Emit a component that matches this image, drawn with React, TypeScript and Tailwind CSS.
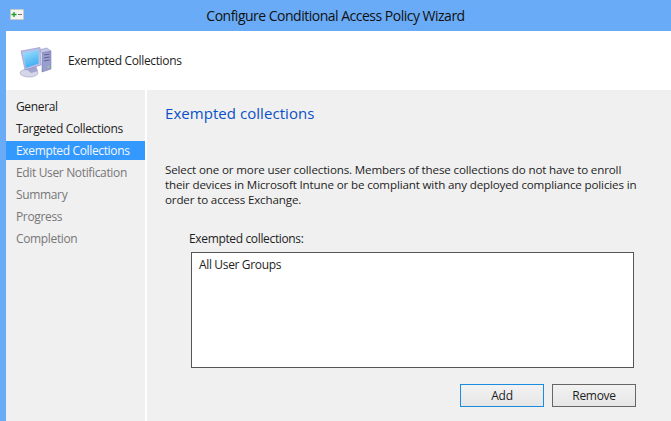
import React from 'react';

const steps = [
  { label: 'General', state: 'done' },
  { label: 'Targeted Collections', state: 'done' },
  { label: 'Exempted Collections', state: 'active' },
  { label: 'Edit User Notification', state: 'todo' },
  { label: 'Summary', state: 'todo' },
  { label: 'Progress', state: 'todo' },
  { label: 'Completion', state: 'todo' },
];

const WizardIcon = () => (
  <svg width="42" height="40" viewBox="0 0 42 40" className="mt-[3px] shrink-0">
    <defs>
      <linearGradient id="screen" x1="0" y1="0" x2="0.4" y2="1">
        <stop offset="0" stopColor="#a8e2fd" />
        <stop offset="1" stopColor="#3fb0f2" />
      </linearGradient>
    </defs>
    {/* tower */}
    <path d="M24 8 L33 6 L37 9 L28 11 Z" fill="#c3c6e6" stroke="#8a8dbd" strokeWidth="0.5" />
    <path d="M28 11 L37 9 L37 27 L28 30 Z" fill="#9a9dd0" stroke="#6d70a3" strokeWidth="0.5" />
    <path d="M30 13 L35.5 12 M30 16 L35.5 15 M30 19 L35.5 18" stroke="#5f628f" strokeWidth="1" />
    <rect x="33.5" y="24" width="1.6" height="1.4" fill="#8fe36f" />
    {/* stand and base */}
    <ellipse cx="15" cy="31" rx="9" ry="4" fill="#d5d6e8" stroke="#8d8fb2" strokeWidth="0.5" />
    <path d="M12 27 L22 24 L24 29 L17 31 Z" fill="#a3a5cf" />
    {/* monitor */}
    <path d="M7 9 L26 5.5 L27 23 L11 28 Z" fill="#b9bee8" stroke="#8b90c4" strokeWidth="0.6" />
    <path d="M9 11 L24.5 8 L24.5 21.5 L12 26 Z" fill="url(#screen)" />
  </svg>
);

export default function App() {
  return (
    <div className="flex h-[421px] w-[671px] flex-col overflow-hidden bg-[#69abf6] font-['Open_Sans','Noto_Sans',sans-serif] text-[12px] text-[#1e1e1e]">
      <div className="relative flex h-[31px] shrink-0 items-center justify-center text-[14px] tracking-[-0.5px] text-[#111]">
        <div className="absolute left-[10px] top-[9px] flex h-[11px] w-[14px] items-center justify-center rounded-[1px] border border-[#c9c9c9] bg-[#f4f4f0]">
          <svg width="12" height="7" viewBox="0 0 12 7">
            <path d="M0.5 3.5 H5.5 M3 1 V6" stroke="#1c9c2c" strokeWidth="1.3" />
            <path d="M7 3.5 H11" stroke="#777" strokeWidth="1" />
          </svg>
        </div>
        <span className="pb-px">Configure Conditional Access Policy Wizard</span>
      </div>
      <div className="ml-[6px] flex flex-1 flex-col bg-white">
        <div className="flex h-[59px] shrink-0 items-center pl-[8px]">
          <WizardIcon />
          <span className="ml-[12px] tracking-[-0.35px]">Exempted Collections</span>
        </div>
        <div className="flex flex-1 gap-[2px]">
          <div className="flex w-[139px] flex-col bg-[#f0f0f0] pt-[6px]">
            {steps.map((step) => (
              <div
                key={step.label}
                className={
                  'flex items-center pl-[10px] tracking-[-0.35px] ' +
                  (step.state === 'active'
                    ? 'mt-px mb-[2px] h-[19px] bg-[#3399ff] text-[#f4f8fd]'
                    : step.state === 'done'
                      ? 'h-[22px] text-[#1e1e1e]'
                      : 'h-[22px] text-[#777777]')
                }
              >
                {step.label}
              </div>
            ))}
          </div>
          <div className="flex flex-1 flex-col bg-[#f0f0f0] pl-[18px]">
            <h1 className="mt-[12px] text-[15px] leading-[22px] tracking-[0.05px] text-[#0a50c8]">Exempted collections</h1>
            <p className="mt-[38px] w-[480px] text-[11.6px] leading-[15px] tracking-[-0.15px]">
              Select one or more user collections. Members of these collections do not have to enroll their devices in Microsoft Intune or be compliant with any deployed compliance policies in order to access Exchange.
            </p>
            <div className="ml-[24px] mt-[23px] tracking-[-0.35px]">Exempted collections:</div>
            <div className="ml-[26px] mt-[4px] h-[116px] w-[443px] border border-[#555] bg-white px-[7px] py-[3px] tracking-[-0.35px]">
              All User Groups
            </div>
            <div className="ml-[295px] mt-[16px] flex gap-[8px]">
              <button className="h-[23px] w-[84px] border border-[#1a8ce0] bg-gradient-to-b from-[#f2f2f2] to-[#e6e6e6] tracking-[-0.3px]">Add</button>
              <button className="h-[23px] w-[84px] border border-[#666] bg-gradient-to-b from-[#f2f2f2] to-[#e6e6e6] tracking-[-0.3px]">Remove</button>
            </div>
          </div>
        </div>
      </div>
    </div>
  );
}
